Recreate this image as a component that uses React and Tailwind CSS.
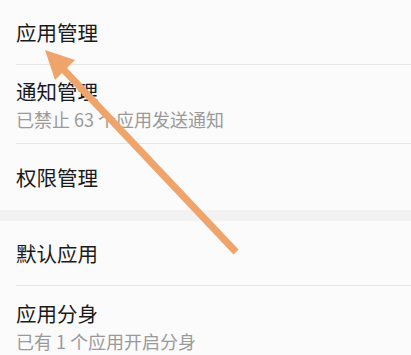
import React from 'react';

const rows = [
  { title: '应用管理', h: 'h-[64px]', divider: true },
  { title: '通知管理', sub: '已禁止 63 个应用发送通知', h: 'h-[78px]', divider: true },
  { title: '权限管理', h: 'h-[66px]', divider: false },
];

const rows2 = [
  { title: '默认应用', h: 'h-[64px]', divider: true },
  { title: '应用分身', sub: '已有 1 个应用开启分身', h: 'h-[80px]', divider: false },
];

const Row = ({ title, sub, h, divider }) => (
  <div>
    <div className={`${h} flex flex-col justify-center pl-4`}>
      <div className="text-[20.5px] leading-[30px] text-[#1a1a1a]">{title}</div>
      {sub && <div className="text-[18px] leading-[27px] text-[#9a9a9a]">{sub}</div>}
    </div>
    {divider && <div className="ml-4 h-px bg-[#e6e6e6]" />}
  </div>
);

export default function App() {
  return (
    <div
      className="relative w-[411px] h-[355px] overflow-hidden bg-[#fbfbfb]"
      style={{ fontFamily: '"Noto Sans CJK SC", "Noto Sans", sans-serif' }}
    >
      {rows.map((r) => (
        <Row key={r.title} {...r} />
      ))}
      <div className="h-[11px] bg-[#f2f2f2]" />
      {rows2.map((r) => (
        <Row key={r.title} {...r} />
      ))}

      {/* annotation arrow */}
      <svg className="absolute inset-0 pointer-events-none" width="411" height="355" viewBox="0 0 411 355">
        <line x1="236" y1="252" x2="64" y2="70" stroke="#efa46b" strokeWidth="7" strokeLinecap="butt" />
        <polygon points="45,50 75,60 55,80" fill="#efa46b" />
      </svg>
    </div>
  );
}
